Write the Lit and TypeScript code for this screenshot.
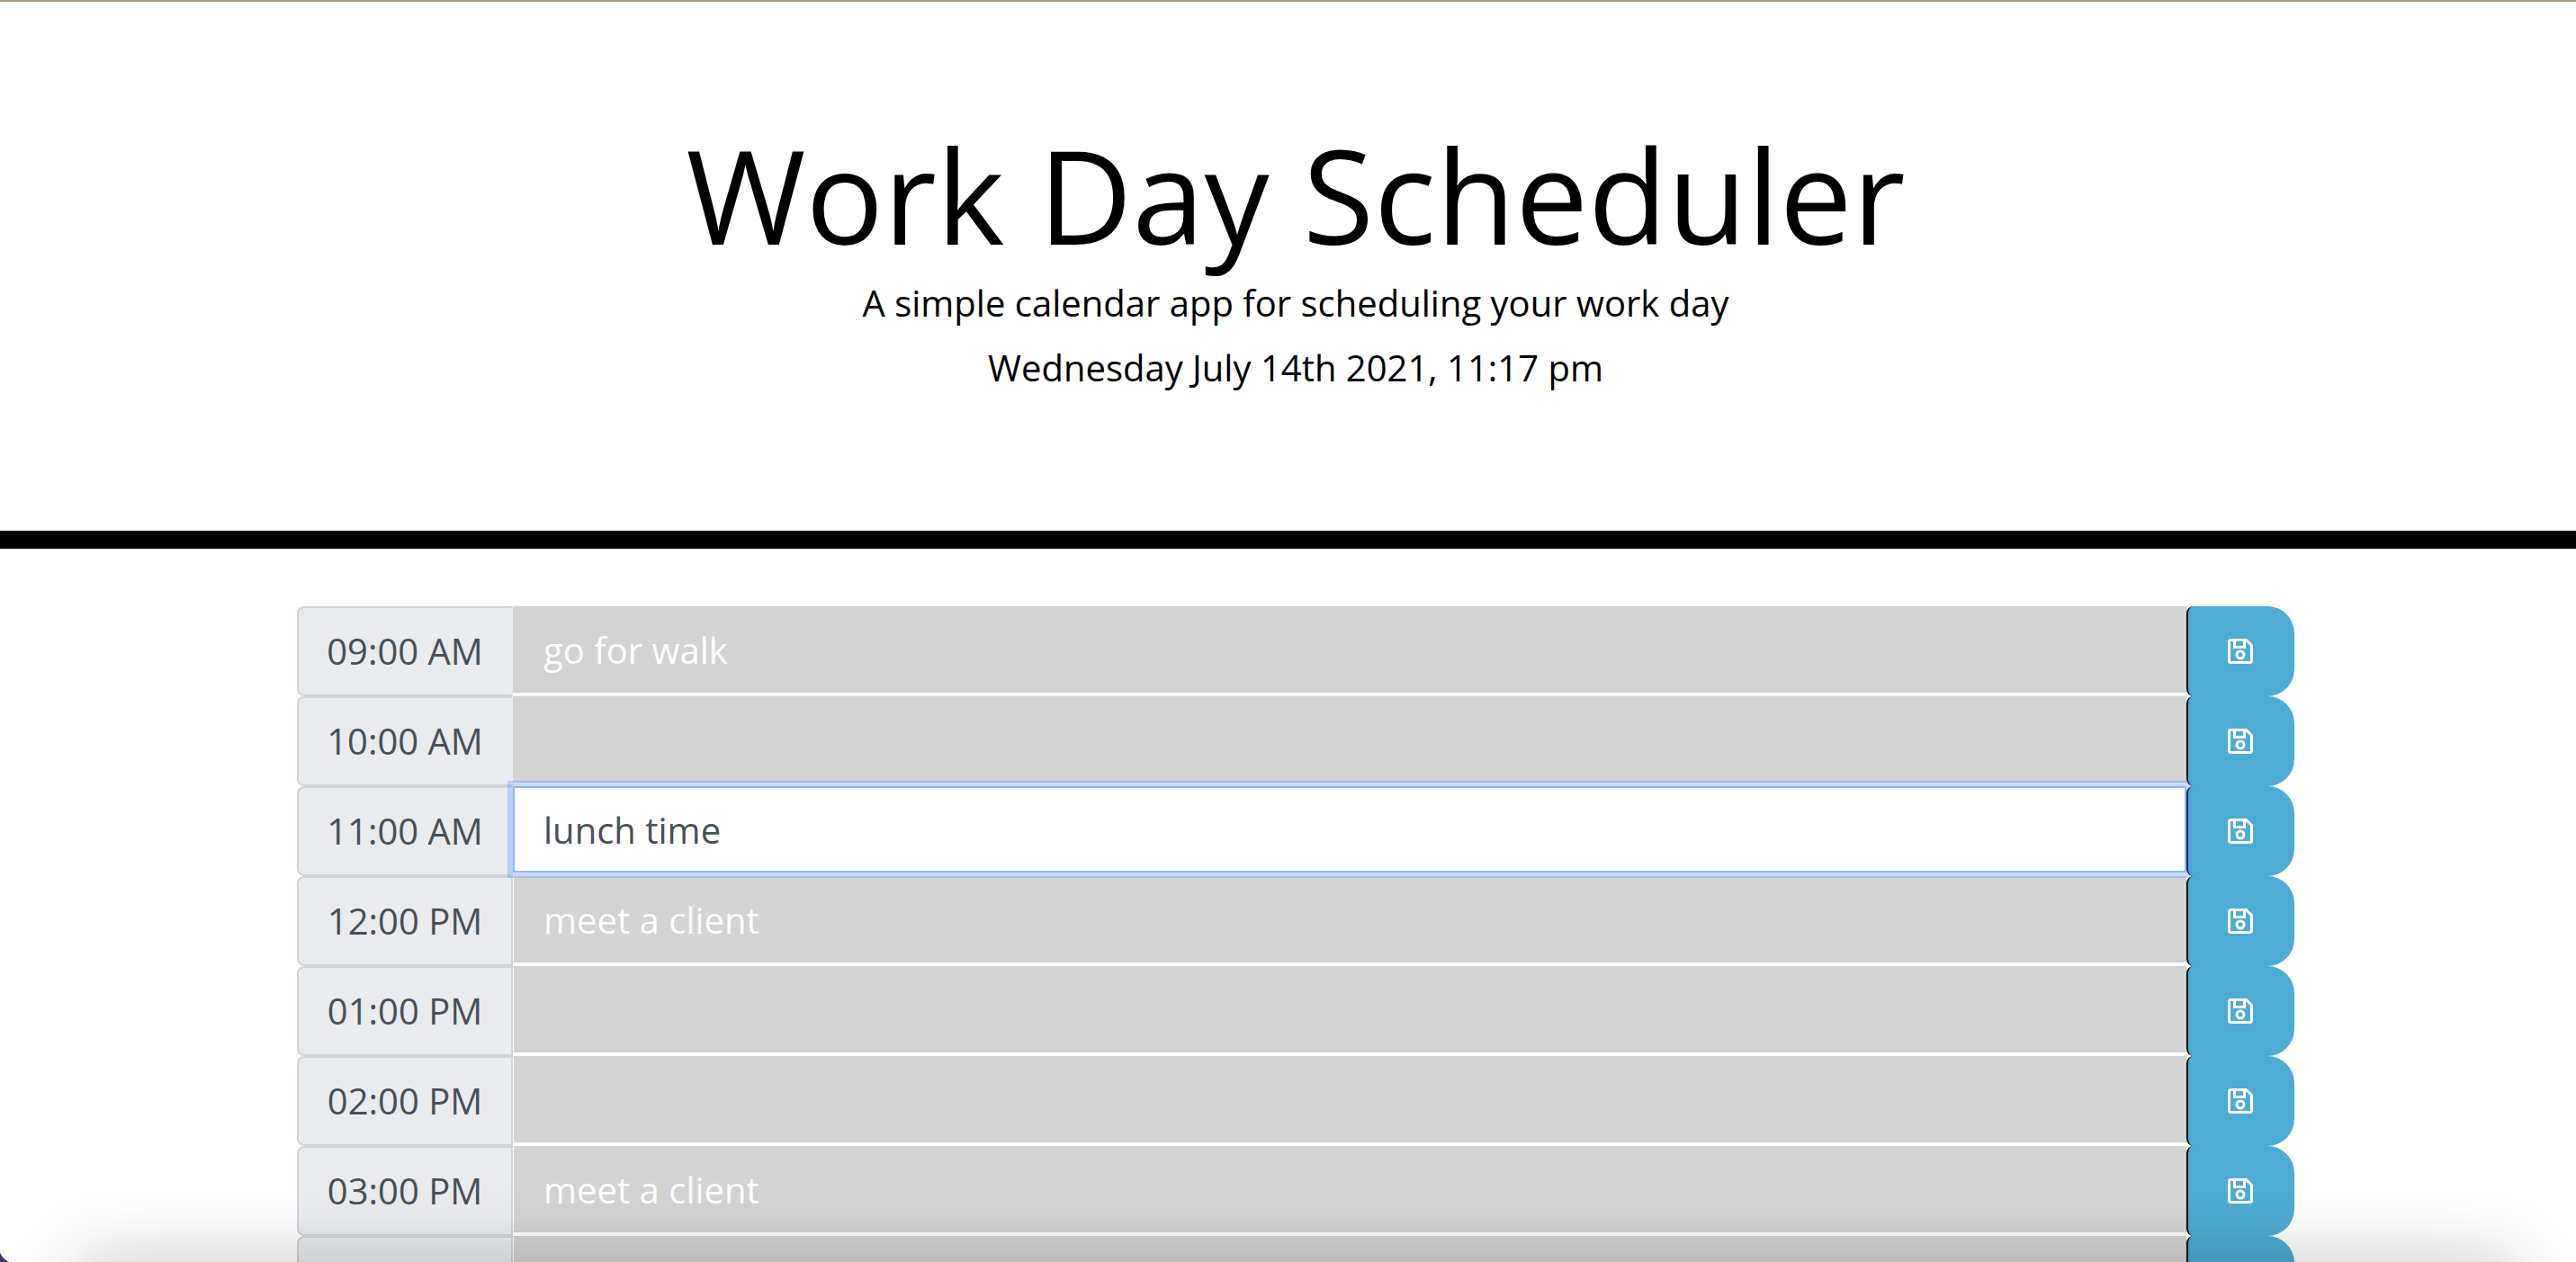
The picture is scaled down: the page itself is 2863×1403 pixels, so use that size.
import { LitElement, html, css } from "lit";
import { customElement, state } from "lit/decorators.js";
import { classMap } from "lit/directives/class-map.js";

interface Slot {
  time: string;
  task: string;
}

@customElement("app-root")
export class AppRoot extends LitElement {
  static styles = css`
    :host {
      display: block;
      position: relative;
      height: 100vh;
      overflow: hidden;
      box-sizing: border-box;
      padding-left: 17px;
      border-top: 2px solid #ad977c;
      background: #fff;
      color: #000;
      font-family: "Open Sans", sans-serif;
      font-size: 40px;
      line-height: 60px;
    }
    .header {
      margin-left: -17px;
      padding: 128px 0 151px 17px;
      border-bottom: 20px solid #000;
      text-align: center;
    }
    .title {
      margin: 0 0 5px;
      font-size: 144px;
      font-weight: 400;
      line-height: 172px;
    }
    .lead {
      margin: 0 0 12px;
    }
    .board {
      display: flex;
      flex-direction: column;
      width: 2220px;
      max-width: 96%;
      margin: 64px auto 0;
    }
    .row {
      display: flex;
      align-items: flex-start;
      height: 100px;
    }
    .time {
      box-sizing: border-box;
      width: 240px;
      height: 100px;
      padding: 18px 0;
      border: 2px solid #ced4d8;
      border-right-color: #e9ebef;
      border-radius: 8px 0 0 8px;
      background: #e9ebef;
      color: #495057;
      text-align: center;
    }
    .task {
      box-sizing: border-box;
      flex: 1;
      min-width: 0;
      height: 96px;
      margin: 0;
      padding: 0 32px;
      border: 2px solid #ced4d8;
      border-left-color: #d3d3d3;
      border-right-color: #d3d3d3;
      border-radius: 0;
      outline: none;
      background: #d3d3d3;
      color: #fff;
      font: inherit;
    }
    .row.later .time {
      border-right-color: #ced4d8;
    }
    .row.later .task {
      padding-left: 33px;
      border-left: 1px solid #fff;
    }
    .row.current .task {
      position: relative;
      border-color: #8ab6fb;
      background: #fff;
      color: #495057;
      box-shadow: 0 0 0 6px rgba(80, 135, 250, 0.3);
    }
    .save {
      display: flex;
      align-items: center;
      justify-content: center;
      box-sizing: border-box;
      width: 120px;
      height: 100px;
      padding: 0 2px 0 0;
      border: 0;
      border-left: 2px solid #000;
      border-radius: 8px 30px 30px 8px;
      background: #4eabd3;
      color: #fff;
    }
    .icon {
      width: 28px;
      height: 28px;
    }
    .shade {
      position: absolute;
      left: 86px;
      right: 68px;
      bottom: -80px;
      height: 80px;
      box-shadow: 0 0 80px rgba(0, 0, 0, 0.24);
    }
    .corner {
      position: absolute;
      left: 0;
      bottom: 0;
      width: 18px;
      height: 18px;
      background: radial-gradient(circle at 100% 0, transparent 19px, #3a3f63 20px);
    }
  `;

  @state() private slots: Slot[] = [
    { time: "09:00 AM", task: "go for walk" },
    { time: "10:00 AM", task: "" },
    { time: "11:00 AM", task: "lunch time" },
    { time: "12:00 PM", task: "meet a client" },
    { time: "01:00 PM", task: "" },
    { time: "02:00 PM", task: "" },
    { time: "03:00 PM", task: "meet a client" },
    { time: "04:00 PM", task: "" },
  ];

  @state() private current = 2;

  private renderSlot(slot: Slot, i: number) {
    const classes = { row: true, current: i === this.current, later: i > this.current };
    return html`
      <div class=${classMap(classes)}>
        <label class="time" for="task-${i}">${slot.time}</label>
        <input
          class="task"
          id="task-${i}"
          type="text"
          .value=${slot.task}
          @focus=${() => (this.current = i)}
        />
        <button class="save" type="button" aria-label="Save ${slot.time}">
          <svg class="icon" viewBox="0 0 28 28" fill="none" stroke="currentColor" stroke-width="3" stroke-linejoin="round">
            <path d="M3 1.5H20.5L26.5 7.5V25A1.5 1.5 0 0 1 25 26.5H3A1.5 1.5 0 0 1 1.5 25V3A1.5 1.5 0 0 1 3 1.5Z" />
            <path d="M7.5 1.5V9.5H18.5V1.5" stroke-linejoin="miter" />
            <circle cx="14" cy="18" r="4" />
          </svg>
        </button>
      </div>
    `;
  }

  render() {
    return html`
      <header class="header">
        <h1 class="title">Work Day Scheduler</h1>
        <p class="lead">A simple calendar app for scheduling your work day</p>
        <time>Wednesday July 14th 2021, 11:17 pm</time>
      </header>
      <main class="board">${this.slots.map((s, i) => this.renderSlot(s, i))}</main>
      <div class="shade"></div>
      <div class="corner"></div>
    `;
  }
}
